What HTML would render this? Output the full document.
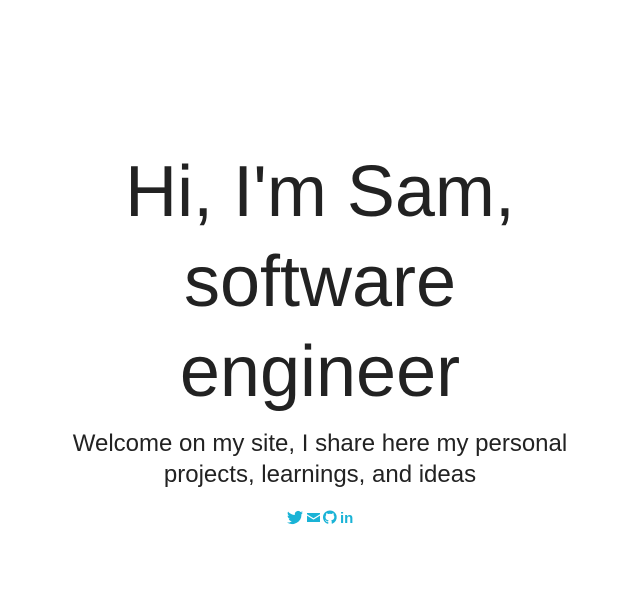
<!DOCTYPE html>
<html><head><style>
html,body{margin:0;padding:0;background:#fff;width:640px;height:598px;overflow:hidden}
body{font-family:"Liberation Sans",sans-serif;color:#222;text-align:center}
h1{position:absolute;left:0;top:147px;width:640px;margin:0;font-weight:400;font-size:72px;line-height:90px;color:#222}
p{position:absolute;left:30px;top:428px;width:580px;margin:0;font-size:24px;line-height:31px;color:#222}
.ic{position:absolute;top:509px;left:287px;height:16px;color:#1ab3d6}
</style></head><body>
<h1>Hi, I'm Sam,<br>software<br>engineer</h1>
<p>Welcome on my site, I share here my personal<br>projects, learnings, and ideas</p>
<svg class="ic" width="70" height="16" viewBox="0 0 70 16">
<g fill="#1ab3d6">
<path d="M16 3.5c-.6.3-1.2.4-1.9.5.7-.4 1.200-1 1.4-1.800-.6.4-1.3.6-2 .8A3.3 3.3 0 0 0 7.9 6C5.2 5.9 2.8 4.6 1.1 2.6c-.9 1.5-.4 3.4 1 4.4-.5 0-1-.2-1.5-.4 0 1.6 1.1 3 2.6 3.2-.5.1-1 .2-1.5.1.4 1.3 1.6 2.3 3.1 2.3A6.6 6.6 0 0 1 0 13.5 9.3 9.3 0 0 0 14.4 5.2c.6-.5 1.2-1 1.6-1.7z"/>
<path d="M20 4h13v1.2l-6.5 4-6.5-4z M20 6.6l6.5 4 6.5-4V13H20z"/>
<path d="M43 1.5a6.8 6.8 0 0 0-2.2 13.3c.3 0 .5-.2.5-.4v-1.3c-1.9.4-2.3-.8-2.3-.8-.3-.8-.8-1-.8-1-.6-.4 0-.4 0-.4.7 0 1 .7 1 .7.6 1 1.6.7 2 .6 0-.4.2-.7.4-.9-1.500-.2-3.100-.8-3.100-3.4 0-.7.3-1.3.7-1.8 0-.2-.3-.9.1-1.8 0 0 .6-.2 1.9.7a6.4 6.4 0 0 1 3.4 0c1.3-.9 1.900-.7 1.900-.7.4.9.1 1.6.1 1.8.4.5.7 1.1.7 1.8 0 2.6-1.6 3.2-3.1 3.4.2.2.5.6.5 1.2v1.8c0 .2.1.4.5.4A6.8 6.8 0 0 0 43 1.5z"/>
<text x="53" y="14" font-family="Liberation Sans, sans-serif" font-weight="700" font-size="15">in</text>
</g></svg>
</body></html>
